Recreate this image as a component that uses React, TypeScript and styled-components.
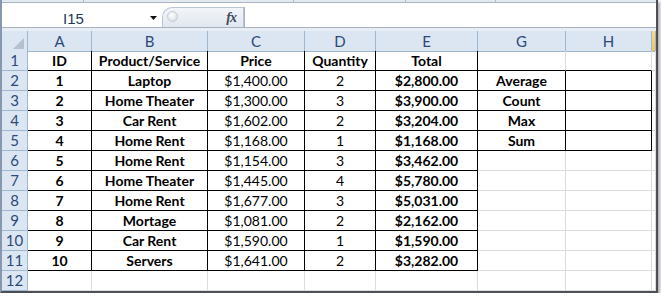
import React, { FC } from 'react'
import styled, { createGlobalStyle } from 'styled-components'

const GlobalStyle = createGlobalStyle`
	body {
		margin: 0;
		background: #ffffff;
		font-family: 'Lato', 'Liberation Sans', sans-serif;
	}
`

const GRID = '#dadcdd'
const EDGE = '#9eb6ce'
const INK = '#000000'

const Window = styled.div`
	width: 654px;
	background: #ffffff;
	border-left: 2px solid #8797ad;
	border-right: 2px solid #4c4f55;
	border-bottom: 2px solid #4c4f55;
	box-shadow: 2px 2px 3px rgba(0, 0, 0, 0.35);
`

const TopStrip = styled.div`
	display: flex;
	height: 2px;
	background: #e3e9f0;
	border-bottom: 1px solid #a9b5c4;
`

const StripGap = styled.div<{ $w: number }>`
	width: ${(p) => p.$w}px;
	border-right: 1px solid #b3bdca;
`

const FormulaBar = styled.div`
	display: flex;
	height: 24px;
	background: #ffffff;
	border-bottom: 1px solid #a7b1bf;
`

const NameBox = styled.div`
	width: 143px;
	display: flex;
	align-items: center;
	justify-content: center;
	padding-top: 6px;
	box-sizing: border-box;
	font-size: 15px;
	color: #1e395b;
	font-family: 'Liberation Sans', sans-serif;
`

const ArrowBox = styled.div`
	width: 17px;
	display: flex;
	align-items: center;
	justify-content: center;
	svg {
		display: block;
		margin-top: 6px;
	}
`

const FxPill = styled.div`
	width: 82px;
	margin-top: 4px;
	display: flex;
	align-items: center;
	justify-content: space-between;
	padding: 0 7px 0 4px;
	background: linear-gradient(#f2f5f9, #e1e7ef);
	border: 1px solid #b9c4d2;
	border-bottom: none;
	border-radius: 10px 0 0 0;
	box-sizing: border-box;
`

const Grip = styled.div`
	width: 9px;
	height: 9px;
	border-radius: 50%;
	background: radial-gradient(circle at 40% 35%, #ffffff, #d2d8e0);
	border: 1px solid #c2cad4;
	margin-top: -2px;
`

const FxLabel = styled.span`
	font-family: 'Liberation Serif', serif;
	font-style: italic;
	font-weight: bold;
	font-size: 14px;
	color: #3f4a5a;
	letter-spacing: -1px;
	margin-top: 1px;
`

const FormulaInput = styled.div`
	flex: 1;
	border-left: 1px solid #a7b1bf;
	margin-top: 4px;
`

const BarGap = styled.div`
	height: 3px;
	background: #e9eef4;
`

const Sheet = styled.div`
	display: grid;
	grid-template-columns: 26px 64px 116px 97px 71px 102px 88px 86px 4px;
	grid-auto-rows: 20px;
	font-size: 14px;
`

const ColHead = styled.div<{ $active?: boolean }>`
	height: 21px;
	box-sizing: border-box;
	display: flex;
	align-items: center;
	justify-content: center;
	background: ${(p) => (p.$active ? 'linear-gradient(#f9dc83, #f2c45e)' : '#dce6f2')};
	border-right: 1px solid ${EDGE};
	border-bottom: 1px solid ${EDGE};
	color: #2b4a78;
	font-size: 15px;
`

const Corner = styled(ColHead)`
	align-items: flex-end;
	justify-content: flex-end;
	padding: 0 3px 2px 0;
	svg {
		display: block;
	}
`

const RowHead = styled.div`
	box-sizing: border-box;
	display: flex;
	align-items: flex-end;
	justify-content: center;
	padding-bottom: 0;
	background: #dce6f2;
	border-right: 1px solid ${EDGE};
	border-bottom: 1px solid ${EDGE};
	color: #2b4a78;
	font-size: 15px;
	line-height: 19px;
`

const Cell = styled.div<{ $bold?: boolean; $r?: string; $b?: string }>`
	box-sizing: border-box;
	display: flex;
	align-items: flex-end;
	justify-content: center;
	padding-bottom: 0;
	line-height: 18px;
	white-space: nowrap;
	font-weight: ${(p) => (p.$bold ? 700 : 400)};
	color: #000000;
	border-right: 1px solid ${(p) => p.$r || GRID};
	border-bottom: 1px solid ${(p) => p.$b || GRID};
`

const columns = ['A', 'B', 'C', 'D', 'E', 'G', 'H']

const rows: [number, string, string, number, string][] = [
	[1, 'Laptop', '$1,400.00', 2, '$2,800.00'],
	[2, 'Home Theater', '$1,300.00', 3, '$3,900.00'],
	[3, 'Car Rent', '$1,602.00', 2, '$3,204.00'],
	[4, 'Home Rent', '$1,168.00', 1, '$1,168.00'],
	[5, 'Home Rent', '$1,154.00', 3, '$3,462.00'],
	[6, 'Home Theater', '$1,445.00', 4, '$5,780.00'],
	[7, 'Home Rent', '$1,677.00', 3, '$5,031.00'],
	[8, 'Mortage', '$1,081.00', 2, '$2,162.00'],
	[9, 'Car Rent', '$1,590.00', 1, '$1,590.00'],
	[10, 'Servers', '$1,641.00', 2, '$3,282.00'],
]

const stats = ['Average', 'Count', 'Max', 'Sum']

const App: FC = () => (
	<>
		<GlobalStyle />
		<Window>
			<TopStrip>
				<StripGap $w={81} />
				<StripGap $w={209} />
				<StripGap $w={111} />
				<StripGap $w={89} />
			</TopStrip>
			<FormulaBar>
				<NameBox>I15</NameBox>
				<ArrowBox>
					<svg width='7' height='4' viewBox='0 0 7 4'>
						<path d='M0 0 H7 L3.5 4 Z' fill='#111' />
					</svg>
				</ArrowBox>
				<FxPill>
					<Grip />
					<FxLabel>fx</FxLabel>
				</FxPill>
				<FormulaInput />
			</FormulaBar>
			<BarGap />
			<Sheet>
				<Corner>
					<svg width='11' height='11' viewBox='0 0 11 11'>
						<path d='M11 0 V11 H0 Z' fill='#b5c0cd' />
					</svg>
				</Corner>
				{columns.map((c) => (
					<ColHead key={c}>{c}</ColHead>
				))}
				<ColHead $active />

				<RowHead>1</RowHead>
				<Cell $bold $r={INK} $b={INK}>ID</Cell>
				<Cell $bold $r={INK} $b={INK}>Product/Service</Cell>
				<Cell $bold $r={INK} $b={INK}>Price</Cell>
				<Cell $bold $r={INK} $b={INK}>Quantity</Cell>
				<Cell $bold $r={INK} $b={INK}>Total</Cell>
				<Cell $b={INK} />
				<Cell $b={INK} />
				<Cell />

				{rows.map(([id, name, price, qty, total], i) => {
					const stat = stats[i]
					return (
						<React.Fragment key={id}>
							<RowHead>{i + 2}</RowHead>
							<Cell $bold $r={INK} $b={INK}>{id}</Cell>
							<Cell $bold $r={INK} $b={INK}>{name}</Cell>
							<Cell $r={INK} $b={INK}>{price}</Cell>
							<Cell $r={INK} $b={INK}>{qty}</Cell>
							<Cell $bold $r={INK} $b={INK}>{total}</Cell>
							<Cell $bold $r={stat ? INK : undefined} $b={stat ? INK : undefined}>
								{stat}
							</Cell>
							<Cell $r={stat ? INK : undefined} $b={stat ? INK : undefined} />
							<Cell />
						</React.Fragment>
					)
				})}

				<RowHead>12</RowHead>
				{columns.map((c) => (
					<Cell key={c} />
				))}
				<Cell />
			</Sheet>
		</Window>
	</>
)

export default App
